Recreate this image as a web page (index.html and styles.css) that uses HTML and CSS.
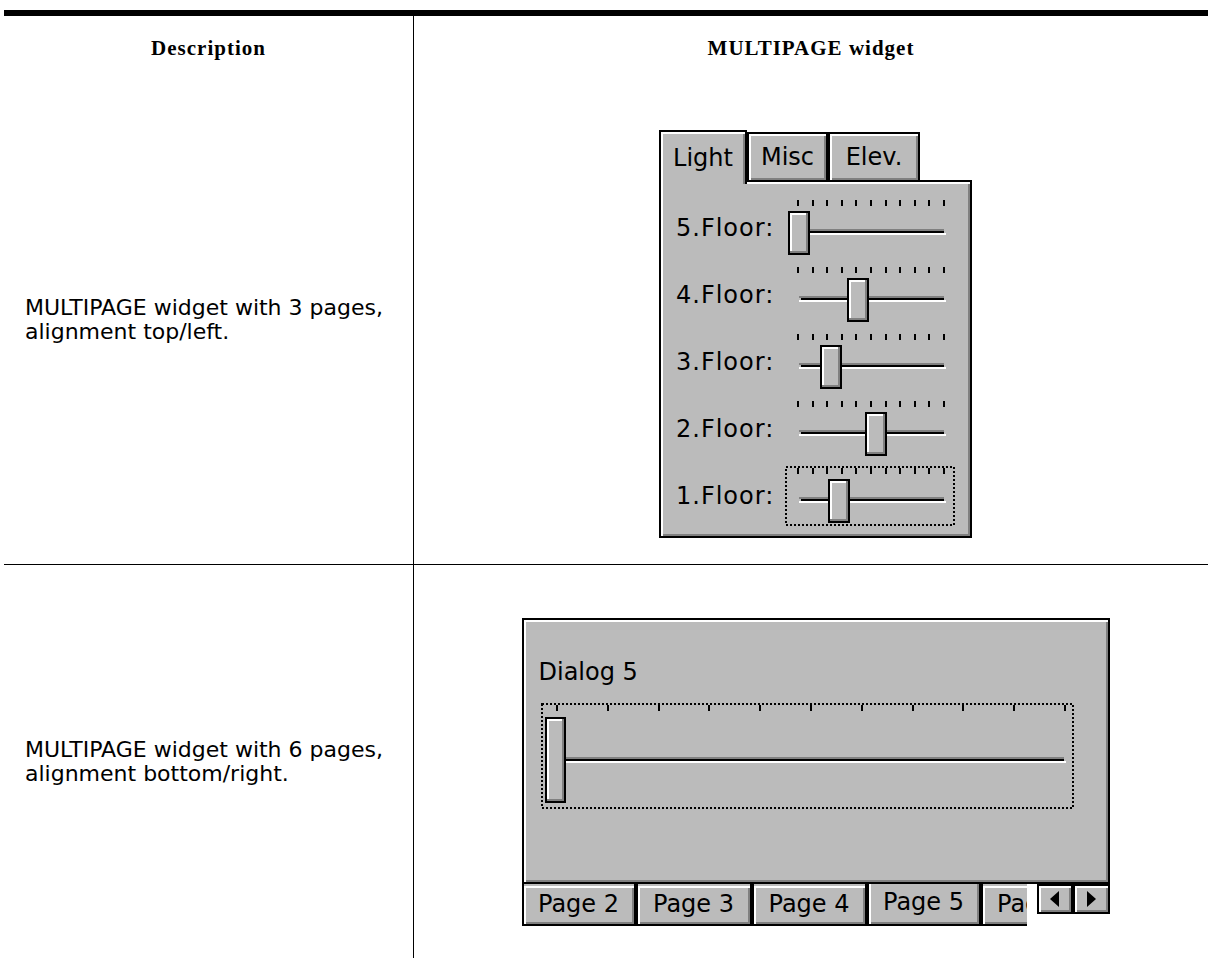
FILE: index.html
```html
<!DOCTYPE html>
<html lang="en">
<head>
    <meta charset="UTF-8">
    <title>MULTIPAGE widget</title>
    <link rel="stylesheet" href="styles.css">
</head>
<body>
<svg class="defs" width="0" height="0">
    <symbol id="thumb1" viewBox="0 0 22 44">
        <rect width="22" height="44" fill="#000"/>
        <rect x="2" y="2" width="18" height="40" fill="#808080"/>
        <rect x="2" y="2" width="16" height="38" fill="#fff"/>
        <rect x="4" y="4" width="14" height="36" fill="#bbb"/>
    </symbol>
    <symbol id="thumb2" viewBox="0 0 21 86">
        <rect width="21" height="86" fill="#000"/>
        <rect x="2" y="2" width="17" height="82" fill="#808080"/>
        <rect x="2" y="2" width="15" height="80" fill="#fff"/>
        <rect x="4" y="4" width="13" height="78" fill="#bbb"/>
    </symbol>
    <symbol id="track1" viewBox="0 0 170 60">
        <path class="ticks" d="M13 2v6M28 2v6M42 2v6M57 2v6M71 2v6M86 2v6M101 2v6M115 2v6M130 2v6M144 2v6M159 2v6"/>
        <rect x="14" y="31" width="145" height="2" fill="#808080"/>
        <rect x="16" y="33" width="143" height="2" fill="#000"/>
        <rect x="14" y="35" width="147" height="2" fill="#fff"/>
    </symbol>
</svg>
<div class="page">
    <div class="rule"></div>
    <div class="table">
        <div class="head">Description</div>
        <div class="head col2">MULTIPAGE widget</div>

        <div class="desc row1">MULTIPAGE widget with 3 pages,<br>alignment top/left.</div>
        <div class="pic row1 col2">
            <div class="mp mp1">
                <div class="tabs-top">
                    <div class="tab on" style="width:88px">Light</div>
                    <div class="tab" style="width:81px">Misc</div>
                    <div class="tab" style="width:92px">Elev.</div>
                </div>
                <div class="panel">
                    <div class="floor">
                        <div class="lbl">5.Floor:</div>
                        <svg class="sl" width="170" height="60"><use href="#track1"/><use href="#thumb1" x="3" y="13" width="22" height="44"/></svg>
                    </div>
                    <div class="floor">
                        <div class="lbl">4.Floor:</div>
                        <svg class="sl" width="170" height="60"><use href="#track1"/><use href="#thumb1" x="62" y="13" width="22" height="44"/></svg>
                    </div>
                    <div class="floor">
                        <div class="lbl">3.Floor:</div>
                        <svg class="sl" width="170" height="60"><use href="#track1"/><use href="#thumb1" x="35" y="13" width="22" height="44"/></svg>
                    </div>
                    <div class="floor">
                        <div class="lbl">2.Floor:</div>
                        <svg class="sl" width="170" height="60"><use href="#track1"/><use href="#thumb1" x="80" y="13" width="22" height="44"/></svg>
                    </div>
                    <div class="floor">
                        <div class="lbl">1.Floor:</div>
                        <svg class="sl" width="170" height="60"><use href="#track1"/><use href="#thumb1" x="43" y="13" width="22" height="44"/><rect class="focus" x="1" y="1" width="168" height="58"/></svg>
                    </div>
                </div>
            </div>
        </div>

        <div class="desc row2">MULTIPAGE widget with 6 pages,<br>alignment bottom/right.</div>
        <div class="pic row2 col2">
            <div class="mp mp2">
                <div class="panel">
                    <div class="dlg">Dialog 5</div>
                    <svg class="sl2" width="533" height="106">
                        <path class="ticks" d="M16 2v6M67 2v6M118 2v6M168 2v6M219 2v6M270 2v6M321 2v6M372 2v6M422 2v6M473 2v6M524 2v6"/>
                        <rect x="15" y="54" width="508" height="2" fill="#808080"/>
                        <rect x="17" y="56" width="506" height="2" fill="#000"/>
                        <rect x="15" y="58" width="510" height="2" fill="#fff"/>
                        <use href="#thumb2" x="4" y="14" width="21" height="86"/>
                        <rect class="focus" x="1" y="1" width="531" height="104"/>
                    </svg>
                </div>
                <div class="tabs-bot">
                    <div class="strip">
                        <div class="tab" style="width:114px">Page 2</div>
                        <div class="tab" style="width:116px">Page 3</div>
                        <div class="tab" style="width:115px">Page 4</div>
                        <div class="tab on" style="width:114px">Page 5</div>
                        <div class="tab" style="width:114px">Page 6</div>
                    </div>
                    <div class="arrows">
                        <div class="btn"><span class="tri left"></span></div>
                        <div class="btn"><span class="tri right"></span></div>
                    </div>
                </div>
            </div>
        </div>
    </div>
</div>
</body>
</html>
```

FILE: styles.css
```css
* {
    margin: 0;
    padding: 0;
    box-sizing: border-box;
}
html,body {
    width: 100%;
    height: 100%;
    background: #fff;
}
body {
    font-family: "DejaVu Sans", sans-serif;
    color: #000;
}
.defs {
    display: block;
    width: 0;
    height: 0;
    overflow: hidden;
}

/* page + document table */
.page {
    height: 100%;
    padding: 10px 0 0 4px;
    display: flex;
    flex-direction: column;
}
.rule {
    height: 6px;
    background: #000;
}
.table {
    flex: 1;
    display: grid;
    grid-template-columns: 409px 1fr;
    grid-template-rows: auto auto 1fr;
}
.head {
    font: bold 21px/24px "Liberation Serif", serif;
    letter-spacing: 1px;
    text-align: center;
    padding: 20px 0 8px;
}
.col2 {
    border-left: 1px solid #000;
}
.row1 {
    border-bottom: 1px solid #000;
}
.desc {
    font-size: 22px;
    line-height: 24px;
    padding-left: 21px;
    display: flex;
    align-items: center;
}
.desc.row1 {
    padding-top: 8px;
}
.pic {
    display: flex;
    justify-content: center;
    align-items: flex-start;
    padding-left: 9px;
}
.pic.row1 {
    padding-top: 62px;
    padding-bottom: 26px;
}
.pic.row2 {
    padding-top: 53px;
}

/* widget look */
.mp {
    font: 24px/1 "DejaVu Sans", sans-serif;
    color: #000;
}
.tab {
    flex: none;
    background: #bbb;
    border: 2px solid #000;
    box-shadow: inset 2px 2px 0 #fff, inset -2px -2px 0 #808080;
    display: flex;
    align-items: center;
    justify-content: center;
    white-space: nowrap;
}
.panel {
    background: #bbb;
    border: 2px solid #000;
    box-shadow: inset 2px 2px 0 #fff, inset -2px -2px 0 #808080;
}
.ticks {
    stroke: #000;
    stroke-width: 2;
    fill: none;
}
.focus {
    fill: none;
    stroke: #000;
    stroke-width: 2;
    stroke-dasharray: 2 2;
}

/* top/left multipage */
.mp1 {
    width: 313px;
    height: 408px;
    display: flex;
    flex-direction: column;
}
.tabs-top {
    display: flex;
    align-items: flex-start;
    height: 52px;
    position: relative;
    z-index: 1;
}
.tabs-top .tab {
    height: 50px;
    margin-top: 2px;
}
.tabs-top .tab.on {
    height: 54px;
    margin-top: 0;
    border-bottom: 0;
    box-shadow: inset 2px 2px 0 #fff, inset -2px 0 0 #808080;
}
.mp1 .panel {
    flex: 1;
    margin-top: -2px;
    padding-top: 16px;
}
.floor {
    display: flex;
    height: 67px;
}
.lbl {
    width: 124px;
    height: 60px;
    padding-left: 15px;
    letter-spacing: 1px;
    display: flex;
    align-items: center;
}
.sl {
    display: block;
}

/* bottom/right multipage */
.mp2 {
    width: 588px;
    display: flex;
    flex-direction: column;
}
.mp2 .panel {
    height: 266px;
    padding: 38px 0 0 15px;
}
.dlg {
    line-height: 28px;
}
.sl2 {
    display: block;
    margin: 17px 0 0 2px;
}
.tabs-bot {
    display: flex;
    align-items: flex-start;
    height: 42px;
}
.strip {
    flex: 1;
    height: 42px;
    display: flex;
    overflow: hidden;
}
.tabs-bot .tab {
    height: 42px;
    border-top: 0;
    box-shadow: inset 0 2px 0 #bbb, inset 2px 4px 0 #fff, inset -2px -2px 0 #808080;
}
.tabs-bot .tab.on {
    height: 46px;
    margin-top: -4px;
    position: relative;
    z-index: 1;
    box-shadow: inset 2px 0 0 #fff, inset -2px -2px 0 #808080;
}
.arrows {
    flex: none;
    width: 83px;
    padding-left: 10px;
    display: flex;
    background: #fff;
}
.btn {
    flex: 1;
    height: 30px;
    background: #bbb;
    border: 2px solid #000;
    box-shadow: inset 2px 2px 0 #fff, inset -2px -2px 0 #808080;
    display: flex;
    align-items: center;
    justify-content: center;
}
.tri {
    width: 0;
    height: 0;
    border-top: 8px solid transparent;
    border-bottom: 8px solid transparent;
}
.tri.left {
    border-right: 9px solid #000;
}
.tri.right {
    border-left: 9px solid #000;
}
```
